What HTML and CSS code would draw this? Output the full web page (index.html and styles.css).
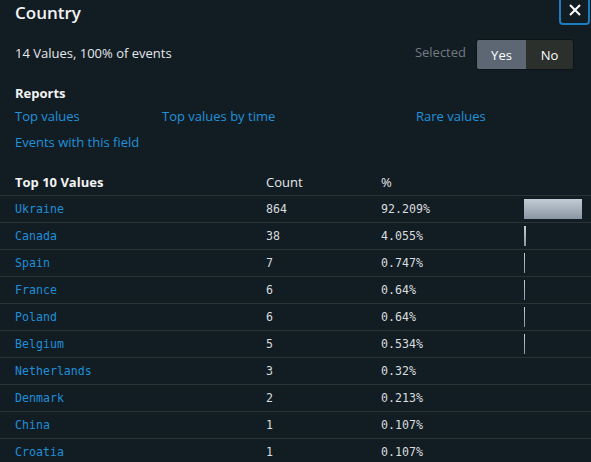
FILE: index.html
```html
<!DOCTYPE html>
<html>
<head>
<meta charset="utf-8">
<link rel="stylesheet" href="styles.css">
</head>
<body>
<div class="panel">
  <header class="head">
    <h1 class="title">Country</h1>
    <button class="close" aria-label="Close"><svg width="12" height="12" viewBox="0 0 12 12"><path d="M1 1L11 11M11 1L1 11" stroke="#fff" stroke-width="2" fill="none"/></svg></button>
  </header>
  <div class="summary">
    <span class="count-text">14 Values, 100% of events</span>
    <div class="sel">
      <span class="sel-label">Selected</span>
      <div class="toggle">
        <span class="tbtn on">Yes</span>
        <span class="tbtn off">No</span>
      </div>
    </div>
  </div>
  <section class="reports">
    <h2 class="rep-title">Reports</h2>
    <div class="links">
      <a class="link">Top values</a>
      <a class="link">Top values by time</a>
      <a class="link">Rare values</a>
      <a class="link">Events with this field</a>
    </div>
  </section>
  <table class="vals">
    <thead>
      <tr><th class="c1">Top 10 Values</th><th class="c2">Count</th><th class="c3">%</th><th class="c4"></th></tr>
    </thead>
    <tbody>
      <tr><td class="c1 v">Ukraine</td><td class="c2 n">864</td><td class="c3 n">92.209%</td><td class="c4"><div class="bar big" style="width:58px"></div></td></tr>
      <tr><td class="c1 v">Canada</td><td class="c2 n">38</td><td class="c3 n">4.055%</td><td class="c4"><div class="bar" style="width:2px"></div></td></tr>
      <tr><td class="c1 v">Spain</td><td class="c2 n">7</td><td class="c3 n">0.747%</td><td class="c4"><div class="bar" style="width:1px"></div></td></tr>
      <tr><td class="c1 v">France</td><td class="c2 n">6</td><td class="c3 n">0.64%</td><td class="c4"><div class="bar" style="width:1px"></div></td></tr>
      <tr><td class="c1 v">Poland</td><td class="c2 n">6</td><td class="c3 n">0.64%</td><td class="c4"><div class="bar" style="width:1px"></div></td></tr>
      <tr><td class="c1 v">Belgium</td><td class="c2 n">5</td><td class="c3 n">0.534%</td><td class="c4"><div class="bar" style="width:1px"></div></td></tr>
      <tr><td class="c1 v">Netherlands</td><td class="c2 n">3</td><td class="c3 n">0.32%</td><td class="c4"></td></tr>
      <tr><td class="c1 v">Denmark</td><td class="c2 n">2</td><td class="c3 n">0.213%</td><td class="c4"></td></tr>
      <tr><td class="c1 v">China</td><td class="c2 n">1</td><td class="c3 n">0.107%</td><td class="c4"></td></tr>
      <tr><td class="c1 v">Croatia</td><td class="c2 n">1</td><td class="c3 n">0.107%</td><td class="c4"></td></tr>
    </tbody>
  </table>
</div>
</body>
</html>
```
FILE: styles.css
```css
html, body {
  margin: 0;
  padding: 0;
  background: #121c23;
  color: #e6e8ea;
  font-family: "Open Sans", "Liberation Sans", sans-serif;
  overflow: hidden;
}
.panel {
  position: relative;
  width: 591px;
  height: 462px;
}
.head {
  height: 26px;
  padding: 0 15px;
  display: flex;
  align-items: center;
}
.title {
  margin: 0;
  font-size: 17px;
  font-weight: 600;
  color: #f2f3f4;
  line-height: 26px;
}
.close {
  position: absolute;
  top: -6px;
  right: 1px;
  width: 31px;
  height: 31px;
  box-sizing: border-box;
  border: 2px solid #1b7cc0;
  border-radius: 4px;
  background: transparent;
  padding: 8px 0 0;
  display: flex;
  justify-content: center;
  align-items: flex-start;
}
.summary {
  margin-top: 13px;
  height: 31px;
  padding: 0 17px 0 15px;
  display: flex;
  align-items: center;
  justify-content: space-between;
}
.count-text {
  font-size: 13px;
  color: #e6e8ea;
  margin-top: -3px;
}
.sel {
  display: flex;
  align-items: center;
  gap: 10px;
}
.sel-label {
  font-size: 13px;
  color: #737b82;
  margin-top: -6px;
}
.toggle {
  display: flex;
  height: 31px;
  border: 1px solid #0d1417;
  border-radius: 3px;
  overflow: hidden;
  box-sizing: border-box;
}
.tbtn {
  display: flex;
  align-items: center;
  justify-content: center;
  font-size: 13px;
  color: #fff;
}
.tbtn.on { width: 49px; background: #5c6773; }
.tbtn.off { width: 47px; background: #2b302d; }
.reports {
  margin-top: 14px;
  padding: 0 15px;
}
.rep-title {
  margin: 0;
  font-size: 13px;
  font-weight: 700;
  line-height: 18px;
  color: #f2f3f4;
}
.links {
  margin-top: 5px;
  display: grid;
  grid-template-columns: 147px 254px auto;
  row-gap: 8px;
}
.link {
  font-size: 13px;
  line-height: 18px;
  color: #1e93dc;
}
.vals {
  margin-top: 18px;
  width: 100%;
  border-collapse: collapse;
  table-layout: fixed;
}
.vals th {
  height: 26px;
  padding: 0;
  text-align: left;
  font-size: 13px;
  font-weight: 400;
  color: #e6e8ea;
}
.vals th.c1 { font-weight: 700; color: #f2f3f4; }
.vals td {
  height: 26px;
  padding: 0;
  border-top: 1px solid #2b3236;
  vertical-align: middle;
}
.c1 { width: 251px; padding-left: 15px !important; }
.c2 { width: 115px; }
.c3 { width: 143px; }
.v {
  font-family: "DejaVu Sans Mono", monospace;
  font-size: 11.6px;
  color: #1e8fd8;
}
.n {
  font-family: "DejaVu Sans Mono", monospace;
  font-size: 11.6px;
  color: #d9dcde;
}
.bar {
  height: 20px;
  background: linear-gradient(#c2ccd6, #8a96a3);
}
```
